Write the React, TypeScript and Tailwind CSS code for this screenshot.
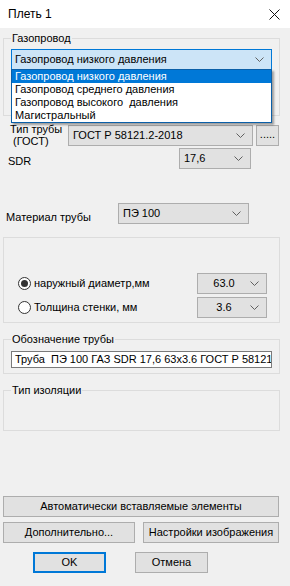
import React from "react";

const Chevron = () => (
  <svg width="9" height="5" viewBox="0 0 9 5" className="shrink-0">
    <path d="M0.5 0.5 L4.5 4.5 L8.5 0.5" fill="none" stroke="#606060" strokeWidth="1" />
  </svg>
);

// grey windows combo box
const Combo = ({ text, className, center }: { text: string; className: string; center?: boolean }) => (
  <div
    className={`flex h-[21px] items-center border border-[#adadad] bg-[#e1e1e1] pr-[7px] ${className}`}
  >
    <span className={`flex-1 whitespace-nowrap ${center ? "text-center" : "pl-[4px]"}`}>{text}</span>
    <Chevron />
  </div>
);

const Btn = ({ text, className }: { text: string; className: string }) => (
  <div
    className={`flex h-[21px] items-center justify-center border border-[#adadad] bg-[#e1e1e1] whitespace-nowrap ${className}`}
  >
    {text}
  </div>
);

const Radio = ({ checked }: { checked?: boolean }) => (
  <svg width="13" height="13" viewBox="0 0 13 13" className="shrink-0">
    <circle cx="6.5" cy="6.5" r="6" fill="#fff" stroke="#333" strokeWidth="1" />
    {checked && <circle cx="6.5" cy="6.5" r="3.5" fill="#333" />}
  </svg>
);

const GroupLabel = ({ text }: { text: string }) => (
  <div className="ml-[7px] -mt-[7px] w-fit bg-[#f0f0f0] px-[1px] leading-[13px]">{text}</div>
);

const gasItems = [
  "Газопровод низкого давления",
  "Газопровод среднего давления",
  "Газопровод высокого  давления",
  "Магистральный",
];

export default function App() {
  return (
    <div className="relative h-[586px] w-[290px] overflow-hidden bg-[#f0f0f0] font-['Liberation_Sans',Arial,sans-serif] text-[11px] leading-[13px] text-black">
      {/* title bar */}
      <div className="flex h-[28px] items-center justify-between bg-white pl-[8px] pr-[10px]">
        <span className="text-[12px]">Плеть 1</span>
        <svg width="11" height="11" viewBox="0 0 11 11">
          <path d="M0.5 0.5 L10.5 10.5 M10.5 0.5 L0.5 10.5" stroke="#111" strokeWidth="1" />
        </svg>
      </div>

      <div className="flex flex-col pl-[3px] pr-[10px]">
        {/* Газопровод */}
        <div className="mt-[10px] h-[78px] border border-[#dcdcdc]">
          <GroupLabel text="Газопровод" />
          <div className="relative mx-[7px] mt-[4px]">
            <div className="flex h-[21px] items-center border border-[#0078d7] bg-[#cce4f7] pr-[7px]">
              <span className="flex-1 pl-[3px] whitespace-nowrap">Газопровод низкого давления</span>
              <Chevron />
            </div>
            {/* open dropdown list */}
            <div className="absolute left-0 right-0 top-[20px] z-10 border border-[#0a5fa8] bg-white shadow-[2px_2px_2px_rgba(0,0,0,0.35)]">
              {gasItems.map((it, i) => (
                <div
                  key={it}
                  className={`h-[13px] pl-[3px] leading-[13px] whitespace-pre ${
                    i === 0 ? "bg-[#0078d7] text-white" : ""
                  }`}
                >
                  {it}
                </div>
              ))}
            </div>
          </div>
        </div>

        {/* Тип трубы */}
        <div className="mt-[9px] flex h-[21px] items-start">
          <div className="-mt-[2px] w-[65px] pl-[7px] leading-[12px]">
            Тип трубы
            <br />
            &nbsp;(ГОСТ)
          </div>
          <Combo text="ГОСТ Р 58121.2-2018" className="w-[185px]" />
          <Btn text="....." className="ml-[3px] w-[23px] pb-[3px]" />
        </div>

        {/* SDR */}
        <div className="mt-[2px] flex items-center">
          <div className="w-[176px] pl-[5px] pt-[6px]">SDR</div>
          <Combo text="17,6" className="w-[72px]" />
        </div>

        {/* Материал трубы */}
        <div className="mt-[34px] flex items-center">
          <div className="w-[115px] pl-[3px] pt-[8px]">Материал трубы</div>
          <Combo text="ПЭ 100" className="w-[131px]" />
        </div>

        {/* размеры */}
        <div className="mt-[13px] flex h-[86px] flex-col gap-[3px] border border-[#dcdcdc] pt-[35px]">
          <div className="flex items-center">
            <div className="flex w-[193px] items-center gap-[3px] pl-[14px]">
              <Radio checked />
              <span>наружный диаметр,мм</span>
            </div>
            <Combo text="63.0" className="w-[70px]" center />
          </div>
          <div className="flex items-center">
            <div className="flex w-[193px] items-center gap-[3px] pl-[14px]">
              <Radio />
              <span>Толщина стенки, мм</span>
            </div>
            <Combo text="3.6" className="w-[70px]" center />
          </div>
        </div>

        {/* Обозначение трубы */}
        <div className="mt-[16px] h-[35px] border border-[#dcdcdc]">
          <GroupLabel text="Обозначение трубы" />
          <div className="mx-[7px] mt-[5px] h-[17px] overflow-hidden border border-[#7a7a7a] bg-white pl-[3px] leading-[15px] whitespace-pre">
            Труба  ПЭ 100 ГАЗ SDR 17,6 63x3.6 ГОСТ Р 58121.2-2018
          </div>
        </div>

        {/* Тип изоляции */}
        <div className="mt-[16px] h-[41px] border border-[#dcdcdc]">
          <GroupLabel text="Тип изоляции" />
        </div>

        {/* buttons */}
        <Btn text="Автоматически вставляемые элементы" className="mt-[65px] w-[276px]" />
        <div className="mt-[5px] flex gap-[8px]">
          <Btn text="Дополнительно..." className="w-[132px]" />
          <Btn text="Настройки  изображения" className="w-[136px]" />
        </div>
        <div className="mt-[9px] flex gap-[29px] pl-[30px]">
          <div className="flex h-[21px] w-[73px] items-center justify-center border-2 border-[#0078d7] bg-[#e1e1e1]">
            OK
          </div>
          <Btn text="Отмена" className="w-[73px]" />
        </div>
      </div>
    </div>
  );
}
